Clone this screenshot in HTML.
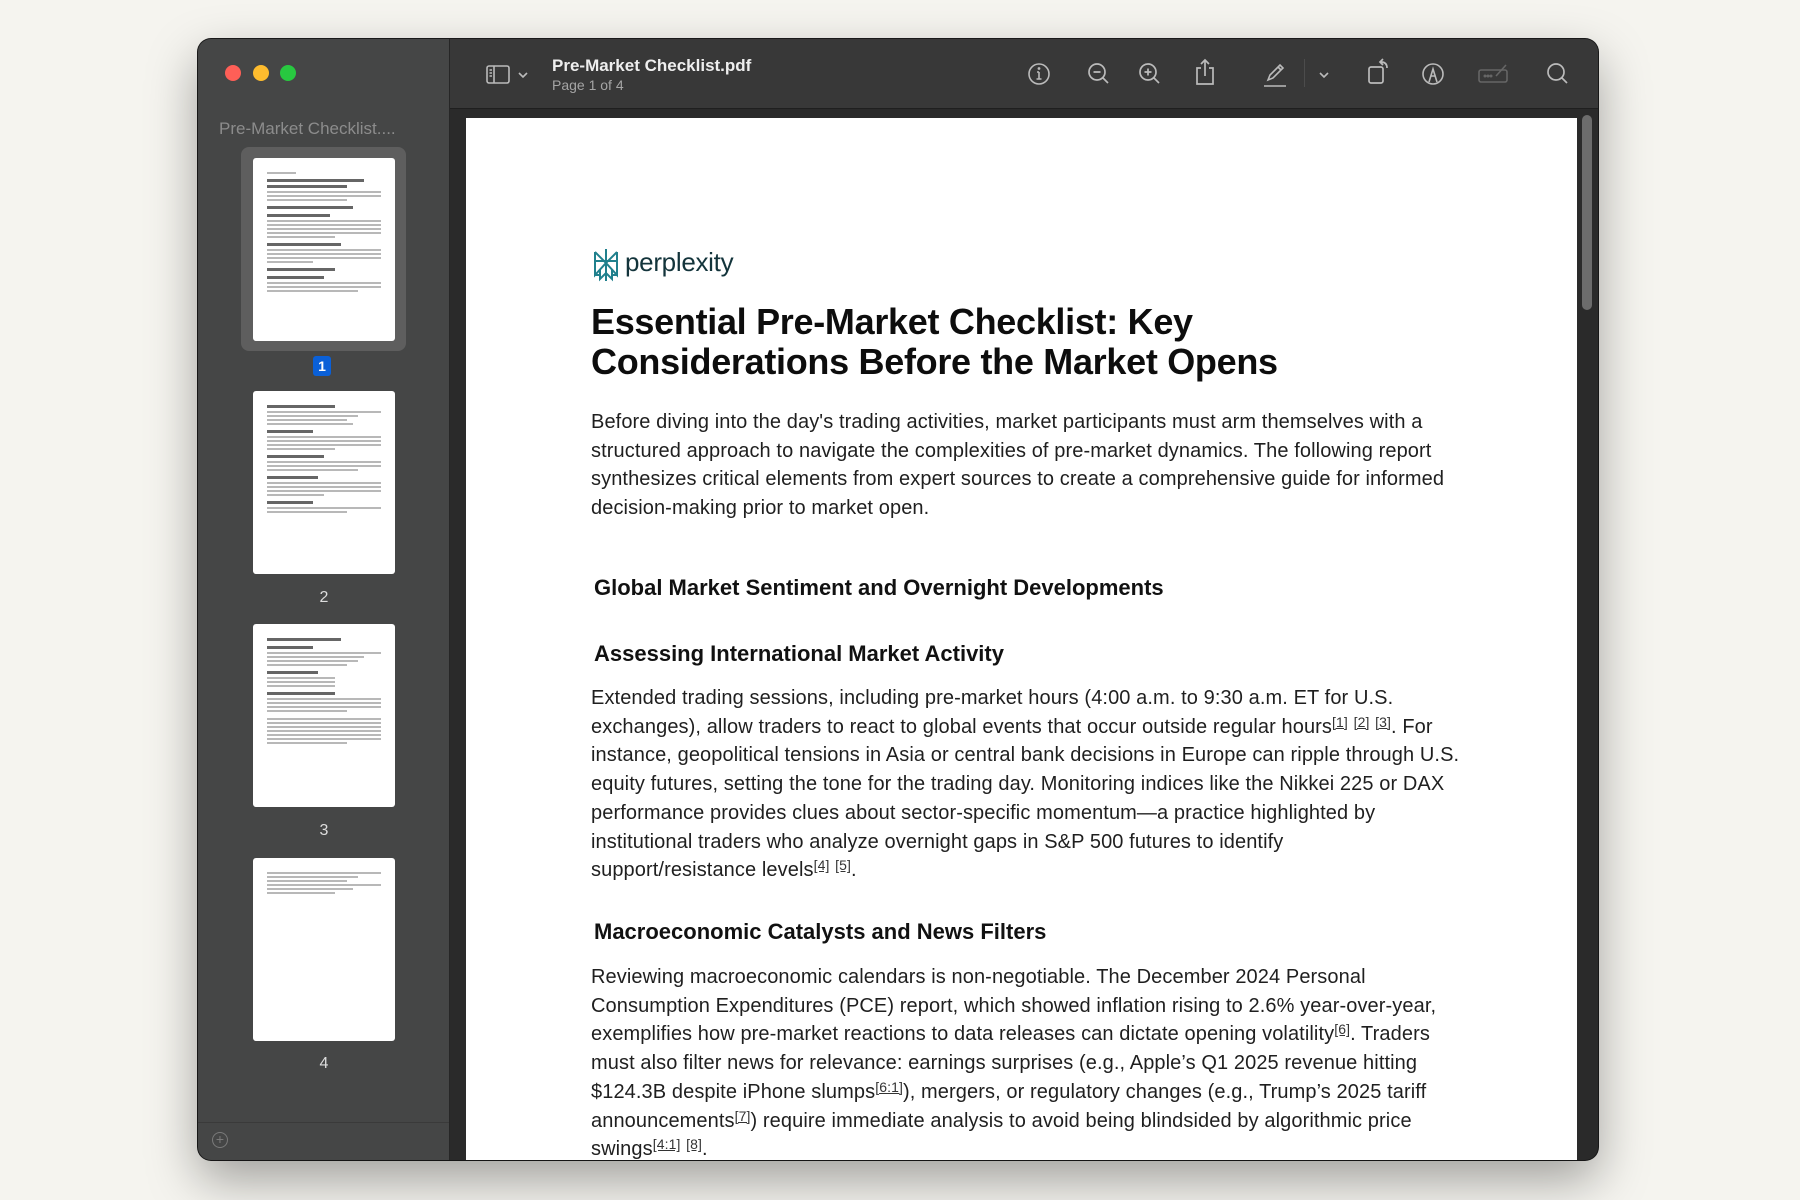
<!DOCTYPE html>
<html><head><meta charset="utf-8"><style>
*{margin:0;padding:0;box-sizing:border-box}
html,body{width:1800px;height:1200px;overflow:hidden;background:#f5f4ef;font-family:"Liberation Sans",sans-serif}
.win{position:absolute;left:198px;top:39px;width:1400px;height:1121px;border-radius:13px;overflow:hidden;background:#2a2a2a;box-shadow:0 20px 50px rgba(0,0,0,.35),0 0 0 1px #1c1c1c}
.side{position:absolute;left:0;top:0;width:252px;height:100%;background:#454646;border-right:1px solid #262626}
.tb{position:absolute;left:252px;top:0;right:0;height:70px;background:#383838;border-bottom:1px solid #1f1f1f}
.dot{position:absolute;top:26px;width:16px;height:16px;border-radius:50%}
.page{position:absolute;left:268px;top:79px;width:1111px;height:1100px;background:#fff}
.t{position:absolute;left:0;white-space:nowrap;color:#1f1f1f}
.p{font-size:20px;line-height:28.7px;letter-spacing:0.1px}
sup{font-size:14px;text-decoration:underline;vertical-align:top;position:relative;top:-5px;color:#333}
.h2{font-size:22px;font-weight:bold;color:#111;left:3px}
.th{position:absolute;left:55px;width:142px;background:#fff;border-radius:3px;padding:14px 14px}
.th i{display:block;height:2px;background:#b8b8b8;margin-bottom:2px}
.th b{display:block;height:3px;background:#666;margin:5px 0 3px}
.lbl{position:absolute;left:0;width:252px;text-align:center;color:#ddd;font-size:16px}
svg.ic{position:absolute;top:22px}
</style></head><body>
<div class="win">
 <div class="side">
  <div class="dot" style="left:27px;background:#fe5f57"></div>
  <div class="dot" style="left:55px;background:#febc2e"></div>
  <div class="dot" style="left:82px;background:#28c840"></div>
  <div style="position:absolute;left:21px;top:80px;color:#8c8c8c;font-size:17px">Pre-Market Checklist....</div>
  <div style="position:absolute;left:43px;top:108px;width:165px;height:204px;background:#5e5e5e;border-radius:8px"></div>
  <div class="th" style="top:119px;height:183px"><i style="width:25%"></i><b style="width:85%"></b><b style="width:70%;margin-top:0"></b><i></i><i></i><i style="width:70%"></i><b style="width:75%"></b><b style="width:55%"></b><i></i><i></i><i></i><i></i><i style="width:60%"></i><b style="width:65%"></b><i></i><i></i><i></i><i style="width:40%"></i><b style="width:60%"></b><b style="width:50%"></b><i></i><i></i><i style="width:80%"></i></div>
  <div style="position:absolute;left:115px;top:317px;width:18px;height:20px;background:#0a60d8;border-radius:3px;color:#fff;font-size:14px;font-weight:bold;text-align:center;line-height:20px">1</div>
  <div class="th" style="top:352px;height:183px"><b style="width:60%;margin-top:0"></b><i></i><i style="width:80%"></i><i style="width:70%"></i><i style="width:75%"></i><b style="width:40%"></b><i></i><i></i><i></i><i style="width:60%"></i><b style="width:50%"></b><i></i><i></i><i style="width:80%"></i><b style="width:45%"></b><i></i><i></i><i></i><i style="width:50%"></i><b style="width:40%"></b><i></i><i style="width:70%"></i></div>
  <div class="lbl" style="top:550px">2</div>
  <div class="th" style="top:585px;height:183px"><b style="width:65%;margin-top:0"></b><b style="width:40%"></b><i></i><i style="width:85%"></i><i style="width:80%"></i><i style="width:70%"></i><b style="width:45%"></b><i style="width:60%"></i><i style="width:60%"></i><i style="width:60%"></i><b style="width:60%"></b><i></i><i></i><i></i><i style="width:70%"></i><i style="margin-top:6px"></i><i></i><i></i><i></i><i></i><i></i><i style="width:70%"></i></div>
  <div class="lbl" style="top:783px">3</div>
  <div class="th" style="top:819px;height:183px"><i></i><i style="width:80%"></i><i style="width:70%"></i><i></i><i style="width:75%"></i><i style="width:60%"></i></div>
  <div class="lbl" style="top:1016px">4</div>
  <div style="position:absolute;left:0;right:0;top:1083px;border-top:1px solid #3a3a3a"></div>
  <div style="position:absolute;left:14px;top:1093px;width:16px;height:16px;border:1.5px solid #7a7a7a;border-radius:50%;color:#7a7a7a;font-size:14px;line-height:12px;text-align:center">+</div>
 </div>
 <div class="tb">
  <svg class="ic" style="left:34px" width="30" height="28" viewBox="0 0 30 28" fill="none" stroke="#bbb" stroke-width="1.6"><rect x="3" y="5" width="22" height="17" rx="2"/><line x1="10" y1="5" x2="10" y2="22"/><line x1="5.5" y1="9" x2="8" y2="9"/><line x1="5.5" y1="12" x2="8" y2="12"/><line x1="5.5" y1="15" x2="8" y2="15"/></svg>
  <svg class="ic" style="left:66px" width="14" height="28" viewBox="0 0 14 28" fill="none" stroke="#bbb" stroke-width="1.6"><path d="M3 12l4 4 4-4"/></svg>
  <div style="position:absolute;left:102px;top:17px;color:#eee;font-size:17px;font-weight:bold">Pre-Market Checklist.pdf</div>
  <div style="position:absolute;left:102px;top:38px;color:#a5a5a5;font-size:14px">Page 1 of 4</div>
  <svg class="ic" style="left:576px" width="26" height="26" viewBox="0 0 26 26" fill="none" stroke="#bbb" stroke-width="1.6"><circle cx="13" cy="13" r="10"/><line x1="13" y1="11" x2="13" y2="18"/><line x1="10.5" y1="18" x2="15.5" y2="18"/><line x1="11" y1="11" x2="13" y2="11"/><circle cx="13" cy="7.5" r=".6" fill="#bbb"/></svg>
  <svg class="ic" style="left:636px" width="26" height="26" viewBox="0 0 26 26" fill="none" stroke="#bbb" stroke-width="1.7"><circle cx="11" cy="11" r="8"/><line x1="17" y1="17" x2="22" y2="22"/><line x1="7.5" y1="11" x2="14.5" y2="11"/></svg>
  <svg class="ic" style="left:687px" width="26" height="26" viewBox="0 0 26 26" fill="none" stroke="#bbb" stroke-width="1.7"><circle cx="11" cy="11" r="8"/><line x1="17" y1="17" x2="22" y2="22"/><line x1="7.5" y1="11" x2="14.5" y2="11"/><line x1="11" y1="7.5" x2="11" y2="14.5"/></svg>
  <svg class="ic" style="left:742px;top:18px" width="26" height="30" viewBox="0 0 26 30" fill="none" stroke="#bbb" stroke-width="1.7"><path d="M9 11H5v16h16V11h-4"/><line x1="13" y1="3" x2="13" y2="19"/><path d="M9 7l4-4 4 4"/></svg>
  <svg class="ic" style="left:811px" width="28" height="28" viewBox="0 0 28 28" fill="none" stroke="#bbb" stroke-width="1.6"><path d="M7 19l2-5 10-10 3 3-10 10z"/><line x1="17" y1="6" x2="20" y2="9"/><line x1="3" y1="25" x2="25" y2="25"/></svg>
  <div style="position:absolute;left:854px;top:20px;width:1px;height:28px;background:#4c4c4c"></div>
  <svg class="ic" style="left:867px" width="14" height="28" viewBox="0 0 14 28" fill="none" stroke="#bbb" stroke-width="1.6"><path d="M3 12l4 4 4-4"/></svg>
  <svg class="ic" style="left:915px;top:18px" width="28" height="30" viewBox="0 0 28 30" fill="none" stroke="#bbb" stroke-width="1.7"><rect x="4" y="10" width="14" height="16" rx="2"/><path d="M16 5c4 0 6 2 6 6"/><path d="M18 2l-3 3 3 3"/></svg>
  <svg class="ic" style="left:970px" width="26" height="26" viewBox="0 0 26 26" fill="none" stroke="#bbb" stroke-width="1.6"><circle cx="13" cy="13" r="10"/><path d="M9 21l4-13 4 13"/><path d="M11 15h4"/></svg>
  <svg class="ic" style="left:1026px" width="34" height="26" viewBox="0 0 34 26" fill="none" stroke="#666" stroke-width="1.6"><rect x="3" y="9" width="28" height="12" rx="2"/><path d="M20 15l10-11"/><circle cx="9" cy="15" r=".7"/><circle cx="12" cy="15" r=".7"/><circle cx="15" cy="15" r=".7"/></svg>
  <svg class="ic" style="left:1095px" width="26" height="26" viewBox="0 0 26 26" fill="none" stroke="#bbb" stroke-width="1.7"><circle cx="11" cy="11" r="8"/><line x1="17" y1="17" x2="22" y2="22"/></svg>
 </div>
 <div style="position:absolute;left:1384px;top:76px;width:10px;height:195px;border-radius:5px;background:#6c6c6c"></div>
 <div class="page">
  <div style="position:absolute;left:125px;top:129px;width:500px;height:40px">
   <svg width="30" height="36" viewBox="0 0 30 36" fill="none" stroke="#20808d" stroke-width="2" style="position:absolute;left:0;top:0"><path d="M15 2v32M4 5l11 11L26 5M4 5v9h22V5M4 14v14l11-12 11 12V14M4 28h5M21 28h5M9 22v10l6-6 6 6V22"/></svg>
   <div style="position:absolute;left:34px;top:0;font-size:26px;color:#13343b;letter-spacing:-0.3px">perplexity</div>
  </div>
  <div class="t" style="left:125px;top:184px;font-size:36px;font-weight:bold;line-height:40px;color:#0d0d0d;letter-spacing:-0.3px">Essential Pre-Market Checklist: Key<br>Considerations Before the Market Opens</div>
  <div style="position:absolute;left:125px;top:0">
  <div class="t p" style="top:290px">Before diving into the day's trading activities, market participants must arm themselves with a<br>structured approach to navigate the complexities of pre-market dynamics. The following report<br>synthesizes critical elements from expert sources to create a comprehensive guide for informed<br>decision-making prior to market open.</div>
  <div class="t h2" style="top:457px">Global Market Sentiment and Overnight Developments</div>
  <div class="t h2" style="top:523px">Assessing International Market Activity</div>
  <div class="t p" style="top:566px">Extended trading sessions, including pre-market hours (4:00 a.m. to 9:30 a.m. ET for U.S.<br>exchanges), allow traders to react to global events that occur outside regular hours<sup>[1]</sup> <sup>[2]</sup> <sup>[3]</sup>. For<br>instance, geopolitical tensions in Asia or central bank decisions in Europe can ripple through U.S.<br>equity futures, setting the tone for the trading day. Monitoring indices like the Nikkei 225 or DAX<br>performance provides clues about sector-specific momentum—a practice highlighted by<br>institutional traders who analyze overnight gaps in S&amp;P 500 futures to identify<br>support/resistance levels<sup>[4]</sup> <sup>[5]</sup>.</div>
  <div class="t h2" style="top:801px">Macroeconomic Catalysts and News Filters</div>
  <div class="t p" style="top:845px">Reviewing macroeconomic calendars is non-negotiable. The December 2024 Personal<br>Consumption Expenditures (PCE) report, which showed inflation rising to 2.6% year-over-year,<br>exemplifies how pre-market reactions to data releases can dictate opening volatility<sup>[6]</sup>. Traders<br>must also filter news for relevance: earnings surprises (e.g., Apple’s Q1 2025 revenue hitting<br>$124.3B despite iPhone slumps<sup>[6:1]</sup>), mergers, or regulatory changes (e.g., Trump’s 2025 tariff<br>announcements<sup>[7]</sup>) require immediate analysis to avoid being blindsided by algorithmic price<br>swings<sup>[4:1]</sup> <sup>[8]</sup>.</div>
  </div>
 </div>
</div>
</body></html>
